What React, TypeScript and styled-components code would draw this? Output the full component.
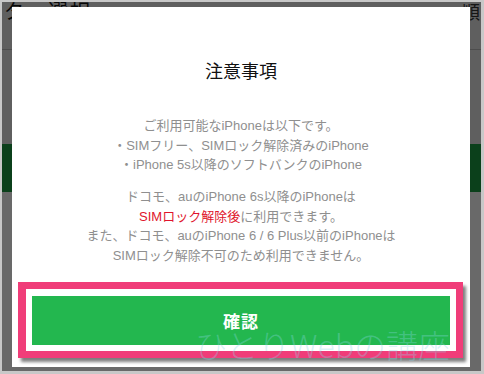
import React from "react";
import styled, { createGlobalStyle } from "styled-components";

const GlobalStyle = createGlobalStyle`
  html, body { margin: 0; padding: 0; background: #ffffff; }
  body { font-family: "Liberation Sans", "Noto Sans CJK JP", sans-serif; }
  * { box-sizing: border-box; }
`;

const Frame = styled.div`
  width: 484px;
  height: 374px;
  background: #c8c8c8;
  padding: 2px 3px 3px 2px;
`;

const Screen = styled.div`
  position: relative;
  width: 100%;
  height: 100%;
  overflow: hidden;
  background: #ffffff;
  display: flex;
  flex-direction: column;
`;

/* ---- page underneath the dialog ---- */
const PageHeader = styled.div`
  height: 48px;
  display: flex;
  justify-content: space-between;
  align-items: flex-start;
  padding: 0 0 0 2px;
  background: #e2e2e2;
  border-bottom: 1px solid #b8b8b8;
`;

const HeaderTitle = styled.span`
  font-size: 20px;
  line-height: 20px;
  color: #111;
  letter-spacing: 2px;
`;

const HeaderSide = styled.span`
  font-size: 18px;
  line-height: 22px;
  color: #333;
  padding-right: 1px;
`;

const UpperArea = styled.div`
  height: 94px;
  background: #e2e2e2;
`;

const GreenBand = styled.div`
  height: 48px;
  background: #1c9a42;
`;

const LowerArea = styled.div`
  flex: 1;
  background: #fafafa;
`;

/* ---- overlay + dialog ---- */
const Overlay = styled.div`
  position: absolute;
  inset: 0;
  background: rgba(0, 0, 0, 0.58);
  display: flex;
  padding: 5px 11px 4px 10px;
`;

const Modal = styled.div`
  flex: 1;
  background: #ffffff;
  padding: 52px 20px 21px;
  display: flex;
  flex-direction: column;
  text-align: center;
`;

const Title = styled.h2`
  margin: 0;
  font-size: 18px;
  line-height: 27px;
  font-weight: normal;
  color: #111;
`;

const Body = styled.div`
  margin-top: 30px;
  display: flex;
  flex-direction: column;
  gap: 12.5px;
`;

const Para = styled.p`
  margin: 0;
  font-size: 13px;
  line-height: 19.5px;
  color: #8f8f8f;
`;

const Alert = styled.span`
  color: #e0142c;
`;

const ButtonWrap = styled.div`
  position: relative;
  margin-top: 31px;
`;

const ConfirmButton = styled.button`
  display: block;
  width: 100%;
  height: 49px;
  border: none;
  background: #23b74f;
  color: #ffffff;
  font-family: "Liberation Sans", "Noto Sans CJK JP", sans-serif;
  font-size: 17px;
  font-weight: bold;
  letter-spacing: 1px;
`;

const Highlight = styled.div`
  position: absolute;
  top: -14px;
  left: -14px;
  right: -13px;
  bottom: -13px;
  border: 8px solid #f03d79;
  border-width: 7px 7px 7px 8px;
  box-shadow: 3px 4px 3px rgba(0, 0, 0, 0.5);
  pointer-events: none;
`;

const Watermark = styled.div`
  position: absolute;
  left: 193px;
  top: 323px;
  font-size: 32px;
  line-height: 38px;
  white-space: nowrap;
  color: rgba(140, 215, 235, 0.32);
  font-family: "Noto Sans CJK JP", sans-serif;
  font-weight: 300;
  pointer-events: none;
`;

export default function App() {
  return (
    <>
      <GlobalStyle />
      <Frame>
        <Screen>
          <PageHeader>
            <HeaderTitle>タ・選択</HeaderTitle>
            <HeaderSide>順</HeaderSide>
          </PageHeader>
          <UpperArea />
          <GreenBand />
          <LowerArea />
          <Overlay>
            <Modal>
              <Title>注意事項</Title>
              <Body>
                <Para>
                  ご利用可能なiPhoneは以下です。
                  <br />・SIMフリー、SIMロック解除済みのiPhone
                  <br />・iPhone 5s以降のソフトバンクのiPhone
                </Para>
                <Para>
                  ドコモ、auのiPhone 6s以降のiPhoneは
                  <br />
                  <Alert>SIMロック解除後</Alert>に利用できます。
                  <br />
                  また、ドコモ、auのiPhone 6 / 6 Plus以前のiPhoneは
                  <br />
                  SIMロック解除不可のため利用できません。
                </Para>
              </Body>
              <ButtonWrap>
                <ConfirmButton>確認</ConfirmButton>
                <Highlight />
              </ButtonWrap>
            </Modal>
          </Overlay>
          <Watermark>ひとりWebの講座</Watermark>
        </Screen>
      </Frame>
    </>
  );
}
